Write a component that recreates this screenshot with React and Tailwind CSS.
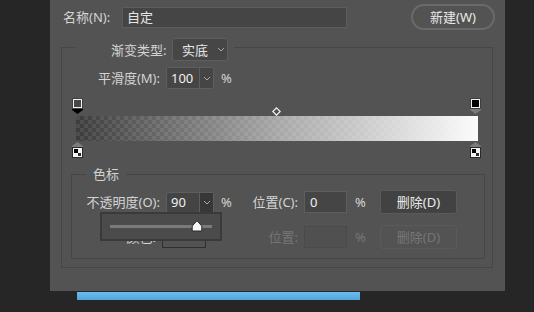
import React from "react";

const Chevron = ({ className = "" }) => (
  <svg width="8" height="5" viewBox="0 0 8 5" className={className}>
    <path d="M1 1 L4 4 L7 1" fill="none" stroke="#a8a8a8" strokeWidth="1" />
  </svg>
);

// top stop: square over a pointer
function TopStop({ fill, pointer }) {
  return (
    <svg width="11" height="16" viewBox="0 0 11 16">
      <rect x="0.5" y="0.5" width="10" height="10" fill="#2a2a2a" />
      <rect x="1.5" y="1.5" width="8" height="8" fill={fill} stroke="#f2f2f2" strokeWidth="1" />
      <polygon points="0,11 11,11 11,12 5.5,16 0,12" fill={pointer} />
    </svg>
  );
}

function BottomStop() {
  return (
    <svg width="11" height="16" viewBox="0 0 11 16">
      <polygon points="5.5,0 11,4 11,5 0,5 0,4" fill="#7c7c7c" />
      <rect x="0.5" y="5.5" width="10" height="10" fill="#f4f4f4" stroke="#2a2a2a" strokeWidth="1" />
      <rect x="2" y="7" width="4" height="4" fill="#000" />
      <rect x="6" y="11" width="3" height="3" fill="#2a2a2a" />
    </svg>
  );
}

export default function App() {
  return (
    <div className="w-[534px] h-[312px] bg-[#262626] overflow-hidden font-['Noto_Sans','Noto_Sans_CJK_SC',sans-serif] text-[13px] text-[#d4d4d4]">
      <div className="relative ml-[50px] w-[455px] h-[291px] bg-[#535353] flex flex-col">
        {/* name row */}
        <div className="flex items-center pt-[4px] h-[30px]">
          <span className="ml-[13px] w-[59px] leading-[18px]">名称(N):</span>
          <div className="w-[225px] h-[21px] bg-[#454545] border border-[#5c5c5c] flex items-center pl-[4px] text-[#e6e6e6] leading-[18px]">
            自定
          </div>
          <button className="ml-[64px] w-[84px] h-[26px] rounded-full border-2 border-[#6a6a6a] text-[#e8e8e8] leading-[18px] flex items-center justify-center">
            新建(W)
          </button>
        </div>

        {/* gradient group */}
        <div className="mt-[17px] ml-[11px] w-[432px] h-[221px] border border-[#464646] flex flex-col">
          <div className="-mt-[10px] ml-[13px] w-fit bg-[#535353] pl-[36px] pr-[6px] flex items-center">
            <span className="w-[61px] leading-[18px]">渐变类型:</span>
            <div className="w-[56px] h-[23px] bg-[#464646] border border-[#5e5e5e] rounded-[3px] flex items-center pl-[9px] text-[#e6e6e6] leading-[18px]">
              <span>实底</span>
              <Chevron className="ml-[9px]" />
            </div>
          </div>

          <div className="mt-[6px] flex items-center h-[22px]">
            <span className="w-[98px] text-right leading-[18px]">平滑度(M):</span>
            <div className="ml-[6px] w-[48px] h-[22px] border border-[#5e5e5e] rounded-[2px] bg-[#454545] flex">
              <div className="w-[32px] pl-[4px] text-[#f0f0f0] leading-[20px]">100</div>
              <div className="flex-1 border-l border-[#5e5e5e] flex items-center justify-center">
                <Chevron />
              </div>
            </div>
            <span className="ml-[7px] leading-[18px]">%</span>
          </div>

          {/* gradient editor */}
          <div className="mt-[9px] ml-[10px] w-[410px] flex flex-col">
            <div className="relative h-[16px] flex justify-between pr-[1px]">
              <TopStop fill="#464646" pointer="#000" />
              <svg width="9" height="9" viewBox="0 0 9 9" className="absolute left-[200px] top-[9px]">
                <polygon points="4.5,0.8 8.2,4.5 4.5,8.2 0.8,4.5" fill="none" stroke="#f5f5f5" strokeWidth="1.2" />
              </svg>
              <TopStop fill="#000" pointer="#7a7a7a" />
            </div>
            <div className="mt-[2px] ml-[4px] w-[402px] h-[25px] bg-[#4a4a4a] bg-[image:conic-gradient(#3c3c3c_25%,#4c4c4c_0_50%,#3c3c3c_0_75%,#4c4c4c_0)] bg-[length:8px_8px]">
              <div className="w-full h-full bg-gradient-to-r from-[rgba(255,255,255,0)] via-[rgba(255,255,255,0.55)] to-[#fbfbfb]" />
            </div>
            <div className="mt-[1px] h-[16px] flex justify-between pr-[1px]">
              <BottomStop />
              <BottomStop />
            </div>
          </div>

          {/* stops group */}
          <div className="mt-[16px] ml-[9px] w-[414px] h-[85px] border border-[#464646] flex flex-col">
            <div className="-mt-[10px] ml-[14px] w-fit bg-[#535353] px-[7px] leading-[18px]">色标</div>

            <div className="mt-[7px] h-[24px] flex items-center">
              <span className="w-[88px] text-right leading-[18px]">不透明度(O):</span>
              <div className="ml-[6px] w-[48px] h-[21px] border border-[#5e5e5e] rounded-[2px] bg-[#444444] flex">
                <div className="w-[32px] pl-[4px] text-[#f0f0f0] leading-[19px]">90</div>
                <div className="flex-1 bg-[#373737] border-l border-[#5e5e5e] flex items-center justify-center">
                  <Chevron />
                </div>
              </div>
              <span className="ml-[7px] w-[12px] leading-[18px]">%</span>
              <span className="w-[65px] text-right leading-[18px]">位置(C):</span>
              <div className="ml-[6px] w-[43px] h-[22px] border border-[#5e5e5e] bg-[#454545] pl-[5px] text-[#f0f0f0] leading-[20px]">0</div>
              <span className="ml-[8px] w-[11px] leading-[18px]">%</span>
              <button className="ml-[14px] w-[77px] h-[24px] bg-[#424242] border border-[#5a5a5a] rounded-[3px] text-[#ececec] leading-[18px]">
                删除(D)
              </button>
            </div>

            <div className="mt-[11px] h-[24px] flex items-center">
              <span className="w-[84px] text-right leading-[18px]">颜色:</span>
              <div className="ml-[6px] w-[44px] h-[22px] border border-[#2f2f2f] bg-[#535353]" />
              <span className="w-[92px] text-right text-[#767676] leading-[18px]">位置:</span>
              <div className="ml-[6px] w-[43px] h-[22px] border border-[#4a4a4a] bg-[#505050]" />
              <span className="ml-[8px] w-[11px] text-[#767676] leading-[18px]">%</span>
              <div className="ml-[14px] w-[77px] h-[24px] border border-[#5a5a5a] rounded-[3px] text-[#767676] leading-[22px] text-center">
                删除(D)
              </div>
            </div>
          </div>
        </div>

        {/* opacity slider popup */}
        <div className="absolute left-[50px] top-[212px] w-[122px] h-[29px] bg-[#4b4b4b] border-2 border-[#3a3a3a] flex items-center pl-[8px]">
          <div className="relative w-[102px] h-[3px] bg-[#7a7a7a]">
            <svg width="12" height="12" viewBox="0 0 12 12" className="absolute left-[81px] -top-[5px]">
              <path d="M6 0.8 L10.8 6 L10.8 11 L1.2 11 L1.2 6 Z" fill="#f6f6f6" stroke="#2c2c2c" strokeWidth="1" />
            </svg>
          </div>
        </div>
      </div>
      <div className="mt-[1px] ml-[77px] w-[283px] h-[8px] bg-gradient-to-b from-[#6cbdeb] to-[#4ea5dc]" />
    </div>
  );
}
